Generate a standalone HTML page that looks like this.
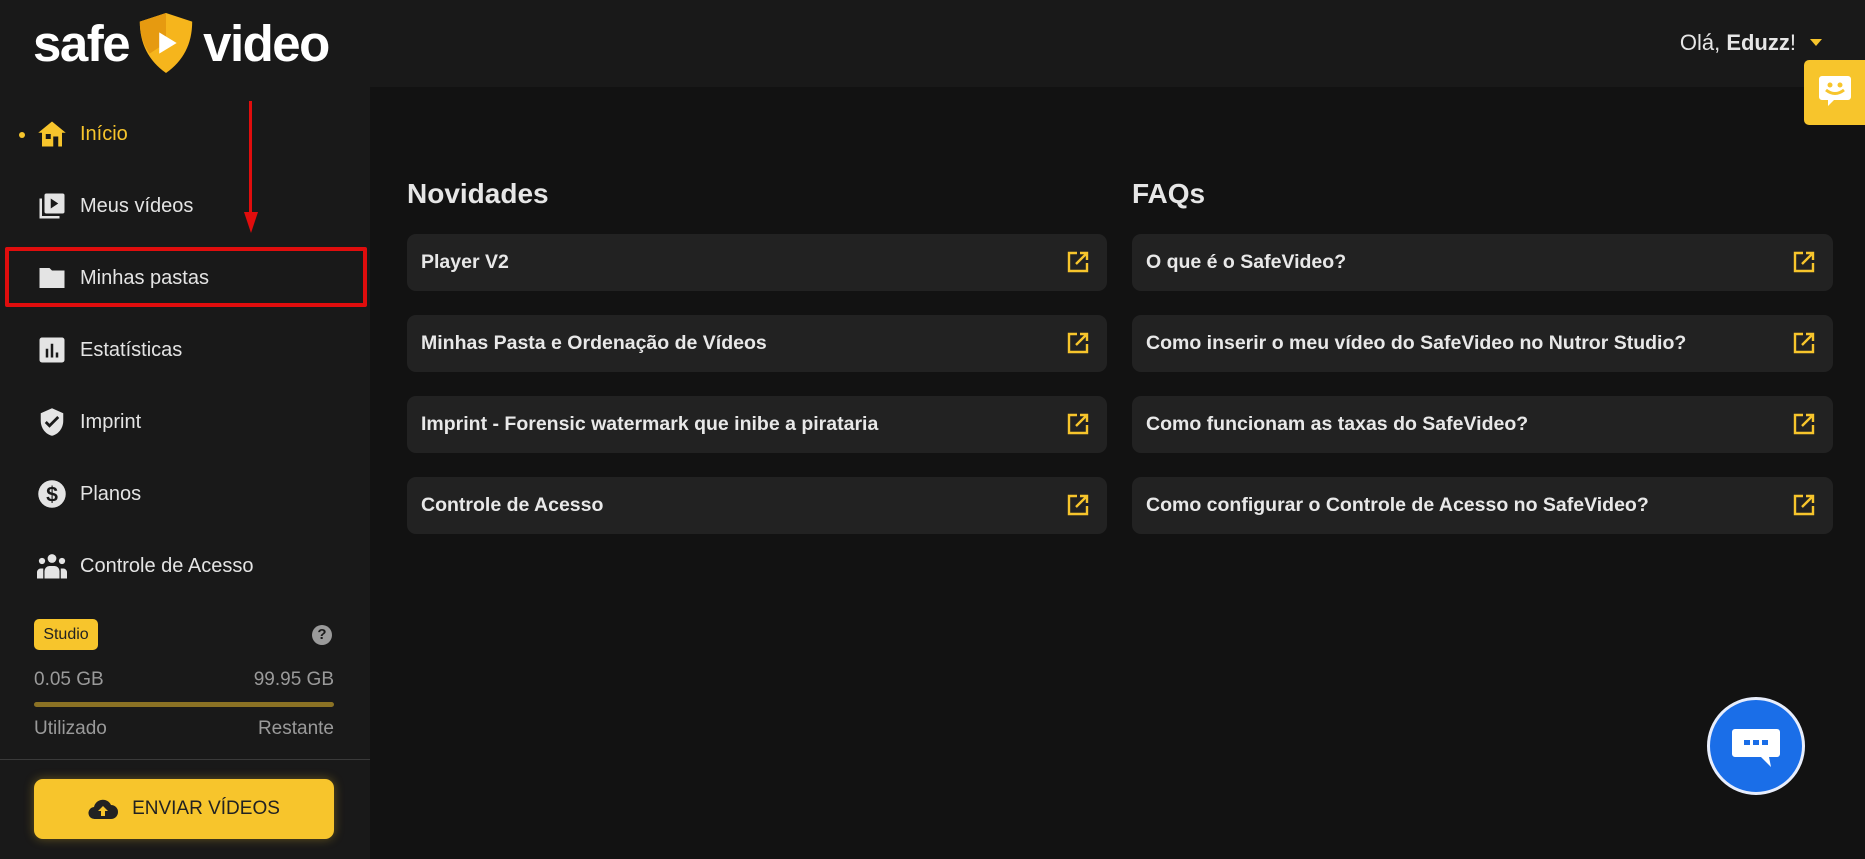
<!DOCTYPE html>
<html><head><meta charset="utf-8"><style>
*{margin:0;padding:0;box-sizing:border-box}
body{width:1865px;height:859px;background:#121212;font-family:"Liberation Sans",sans-serif;overflow:hidden;position:relative;color:#e6e6e6}
.header{position:absolute;left:0;top:0;width:1865px;height:87px;background:#191919}
.side{position:absolute;left:0;top:87px;width:370px;height:772px;background:#191919}
.logo{position:absolute;left:33px;top:8px;height:70px;display:flex;align-items:center;font-size:51px;font-weight:bold;color:#fff;letter-spacing:-1.5px}
.nav{position:absolute;left:37px;display:flex;align-items:center;font-size:20px;color:#e4e4e4}
.nav svg{width:30px;height:30px;margin-right:13px}
.card{position:absolute;height:57px;background:#222;border-radius:9px;font-size:19.5px;font-weight:bold;color:#e8e8e8;padding-left:14px;display:flex;align-items:center}
.card svg{position:absolute;right:18px;top:17px}
h2{position:absolute;font-size:28px;font-weight:bold;color:#e6e6e6}
</style></head><body>
<div class="header"></div>
<div class="side"></div>
<div class="logo"><span>safe</span>
<svg width="64" height="66" viewBox="0 0 66 66" style="margin:0 5px"><path d="M33 2 L60 11 Q60 45 33 64 Q6 45 6 11 Z" fill="#f6b51c"/><path d="M33 2 L6 11 Q6 30 16 44 L33 33 Z" fill="#e69a10"/><path d="M26 22 L44 33 L26 44 Z" fill="#fff"/></svg>
<span>video</span></div>
<div style="position:absolute;right:69px;top:30px;font-size:22px;color:#e6e6e6">Olá, <b>Eduzz</b>!</div>
<div style="position:absolute;left:1810px;top:39px;border-left:6px solid transparent;border-right:6px solid transparent;border-top:7px solid #f7c52c"></div>
<div style="position:absolute;left:1804px;top:60px;width:61px;height:65px;background:#f7c52c;border-radius:5px 0 0 5px"></div>
<svg style="position:absolute;left:1818px;top:74px" width="34" height="36" viewBox="0 0 34 36"><path d="M4 2h26a3 3 0 0 1 3 3v18a3 3 0 0 1-3 3H16l-6 6v-6H4a3 3 0 0 1-3-3V5a3 3 0 0 1 3-3z" fill="#fff"/><circle cx="12" cy="11" r="2.5" fill="#f7c52c"/><circle cx="22" cy="11" r="2.5" fill="#f7c52c"/><path d="M8 16q9 7 18 0" stroke="#f7c52c" stroke-width="3" fill="none"/></svg>

<div style="position:absolute;left:19px;top:132px;width:6px;height:6px;border-radius:50%;background:#f7c52c"></div>
<div class="nav" style="top:119px;color:#f7c52c"><svg viewBox="0 0 24 24"><path d="M12 2 L1 11h3v11h16V11h3z" fill="#f7c52c"/><rect x="7" y="12" width="4" height="4" fill="#191919"/><rect x="13" y="14" width="4" height="8" fill="#191919"/></svg>Início</div>
<div class="nav" style="top:191px"><svg viewBox="0 0 24 24"><path d="M2 6h2v14h14v2H2z" fill="#e4e4e4"/><rect x="6" y="2" width="16" height="16" rx="1.5" fill="#e4e4e4"/><path d="M11 6l6 4-6 4z" fill="#191919"/></svg>Meus vídeos</div>
<div class="nav" style="top:263px"><svg viewBox="0 0 24 24"><path d="M2 4h8l2 2h10v14H2z" fill="#e4e4e4"/></svg>Minhas pastas</div>
<div class="nav" style="top:335px"><svg viewBox="0 0 24 24"><rect x="2" y="2" width="20" height="20" rx="2" fill="#e4e4e4"/><rect x="7" y="11" width="2" height="7" fill="#191919"/><rect x="11" y="7" width="2" height="11" fill="#191919"/><rect x="15" y="14" width="2" height="4" fill="#191919"/></svg>Estatísticas</div>
<div class="nav" style="top:407px"><svg viewBox="0 0 24 24"><path d="M12 1L3 5v6c0 6 4 11 9 12 5-1 9-6 9-12V5z" fill="#e4e4e4"/><path d="M7 12l3 3 7-7" stroke="#191919" stroke-width="2.2" fill="none"/></svg>Imprint</div>
<div class="nav" style="top:479px"><svg viewBox="0 0 24 24"><circle cx="12" cy="12" r="11" fill="#e4e4e4"/><text x="12" y="18" text-anchor="middle" font-size="17" font-weight="bold" fill="#191919" font-family="Liberation Sans">$</text></svg>Planos</div>
<div class="nav" style="top:551px"><svg viewBox="0 0 24 24"><circle cx="12" cy="6" r="3.5" fill="#e4e4e4"/><circle cx="4" cy="8" r="2.5" fill="#e4e4e4"/><circle cx="20" cy="8" r="2.5" fill="#e4e4e4"/><path d="M6 22v-6a4 4 0 0 1 4-4h4a4 4 0 0 1 4 4v6z" fill="#e4e4e4"/><path d="M0 22v-5a3 3 0 0 1 3-3h2v8zM24 22v-5a3 3 0 0 0-3-3h-2v8z" fill="#e4e4e4"/></svg>Controle de Acesso</div>

<div style="position:absolute;left:5px;top:247px;width:362px;height:60px;border:4px solid #e00d0d;border-radius:2px"></div>
<div style="position:absolute;left:249px;top:101px;width:3px;height:115px;background:#e00d0d"></div>
<div style="position:absolute;left:244px;top:212px;border-left:7px solid transparent;border-right:7px solid transparent;border-top:21px solid #e00d0d"></div>

<div style="position:absolute;left:34px;top:619px;width:64px;height:31px;background:#f7c52c;border-radius:5px;color:#222;font-size:16px;display:flex;align-items:center;justify-content:center">Studio</div>
<div style="position:absolute;left:312px;top:625px;width:20px;height:20px;border-radius:50%;background:#9a9a9a;color:#191919;font-size:15px;font-weight:bold;text-align:center;line-height:20px">?</div>
<div style="position:absolute;left:34px;top:669px;font-size:19px;color:#9a9a9a">0.05 GB</div>
<div style="position:absolute;right:1531px;top:669px;font-size:19px;color:#9a9a9a">99.95 GB</div>
<div style="position:absolute;left:34px;top:702px;width:300px;height:5px;border-radius:3px;background:#8b7224"></div>
<div style="position:absolute;left:34px;top:718px;font-size:19px;color:#9a9a9a">Utilizado</div>
<div style="position:absolute;right:1531px;top:718px;font-size:19px;color:#9a9a9a">Restante</div>
<div style="position:absolute;left:0;top:759px;width:370px;height:1px;background:#3a3a3a"></div>
<div style="position:absolute;left:34px;top:779px;width:300px;height:60px;background:#f7c52c;border-radius:9px;box-shadow:0 0 10px rgba(247,197,44,.35);display:flex;align-items:center;justify-content:center;color:#222;font-size:19px;font-weight:500">
<svg width="30" height="22" viewBox="0 0 30 22" style="margin-right:14px"><path d="M7 21a6 6 0 0 1-1-12A9 9 0 0 1 23 7a7 7 0 0 1 0 14z" fill="#222"/><path d="M15 8l-5 5h3v5h4v-5h3z" fill="#f7c52c"/></svg>ENVIAR VÍDEOS</div>

<h2 style="left:407px;top:178px">Novidades</h2>
<h2 style="left:1132px;top:178px">FAQs</h2>

<div class="card" style="left:407px;top:234px;width:700px">Player V2<svg width="22" height="22" viewBox="0 0 22 22"><path d="M10 2H2v18h18v-8" stroke="#f7c52c" stroke-width="2.4" fill="none"/><path d="M9 13L20 2M13 2h7v7" stroke="#f7c52c" stroke-width="2.4" fill="none"/></svg></div>
<div class="card" style="left:407px;top:315px;width:700px">Minhas Pasta e Ordenação de Vídeos<svg width="22" height="22" viewBox="0 0 22 22"><path d="M10 2H2v18h18v-8" stroke="#f7c52c" stroke-width="2.4" fill="none"/><path d="M9 13L20 2M13 2h7v7" stroke="#f7c52c" stroke-width="2.4" fill="none"/></svg></div>
<div class="card" style="left:407px;top:396px;width:700px">Imprint - Forensic watermark que inibe a pirataria<svg width="22" height="22" viewBox="0 0 22 22"><path d="M10 2H2v18h18v-8" stroke="#f7c52c" stroke-width="2.4" fill="none"/><path d="M9 13L20 2M13 2h7v7" stroke="#f7c52c" stroke-width="2.4" fill="none"/></svg></div>
<div class="card" style="left:407px;top:477px;width:700px">Controle de Acesso<svg width="22" height="22" viewBox="0 0 22 22"><path d="M10 2H2v18h18v-8" stroke="#f7c52c" stroke-width="2.4" fill="none"/><path d="M9 13L20 2M13 2h7v7" stroke="#f7c52c" stroke-width="2.4" fill="none"/></svg></div>

<div class="card" style="left:1132px;top:234px;width:701px">O que é o SafeVideo?<svg width="22" height="22" viewBox="0 0 22 22"><path d="M10 2H2v18h18v-8" stroke="#f7c52c" stroke-width="2.4" fill="none"/><path d="M9 13L20 2M13 2h7v7" stroke="#f7c52c" stroke-width="2.4" fill="none"/></svg></div>
<div class="card" style="left:1132px;top:315px;width:701px">Como inserir o meu vídeo do SafeVideo no Nutror Studio?<svg width="22" height="22" viewBox="0 0 22 22"><path d="M10 2H2v18h18v-8" stroke="#f7c52c" stroke-width="2.4" fill="none"/><path d="M9 13L20 2M13 2h7v7" stroke="#f7c52c" stroke-width="2.4" fill="none"/></svg></div>
<div class="card" style="left:1132px;top:396px;width:701px">Como funcionam as taxas do SafeVideo?<svg width="22" height="22" viewBox="0 0 22 22"><path d="M10 2H2v18h18v-8" stroke="#f7c52c" stroke-width="2.4" fill="none"/><path d="M9 13L20 2M13 2h7v7" stroke="#f7c52c" stroke-width="2.4" fill="none"/></svg></div>
<div class="card" style="left:1132px;top:477px;width:701px">Como configurar o Controle de Acesso no SafeVideo?<svg width="22" height="22" viewBox="0 0 22 22"><path d="M10 2H2v18h18v-8" stroke="#f7c52c" stroke-width="2.4" fill="none"/><path d="M9 13L20 2M13 2h7v7" stroke="#f7c52c" stroke-width="2.4" fill="none"/></svg></div>

<div style="position:absolute;left:1707px;top:697px;width:98px;height:98px;border-radius:50%;background:#1a6ee8;border:3px solid #e8eefc"></div>
<svg style="position:absolute;left:1731px;top:727px" width="50" height="46" viewBox="0 0 50 46"><path d="M4 2h42a3 3 0 0 1 3 3v22a3 3 0 0 1-3 3H38l2 10-10-10H4a3 3 0 0 1-3-3V5a3 3 0 0 1 3-3z" fill="#fff"/><rect x="13" y="13" width="6" height="5" fill="#1a6ee8"/><rect x="22" y="13" width="6" height="5" fill="#1a6ee8"/><rect x="31" y="13" width="6" height="5" fill="#1a6ee8"/></svg>
</body></html>
